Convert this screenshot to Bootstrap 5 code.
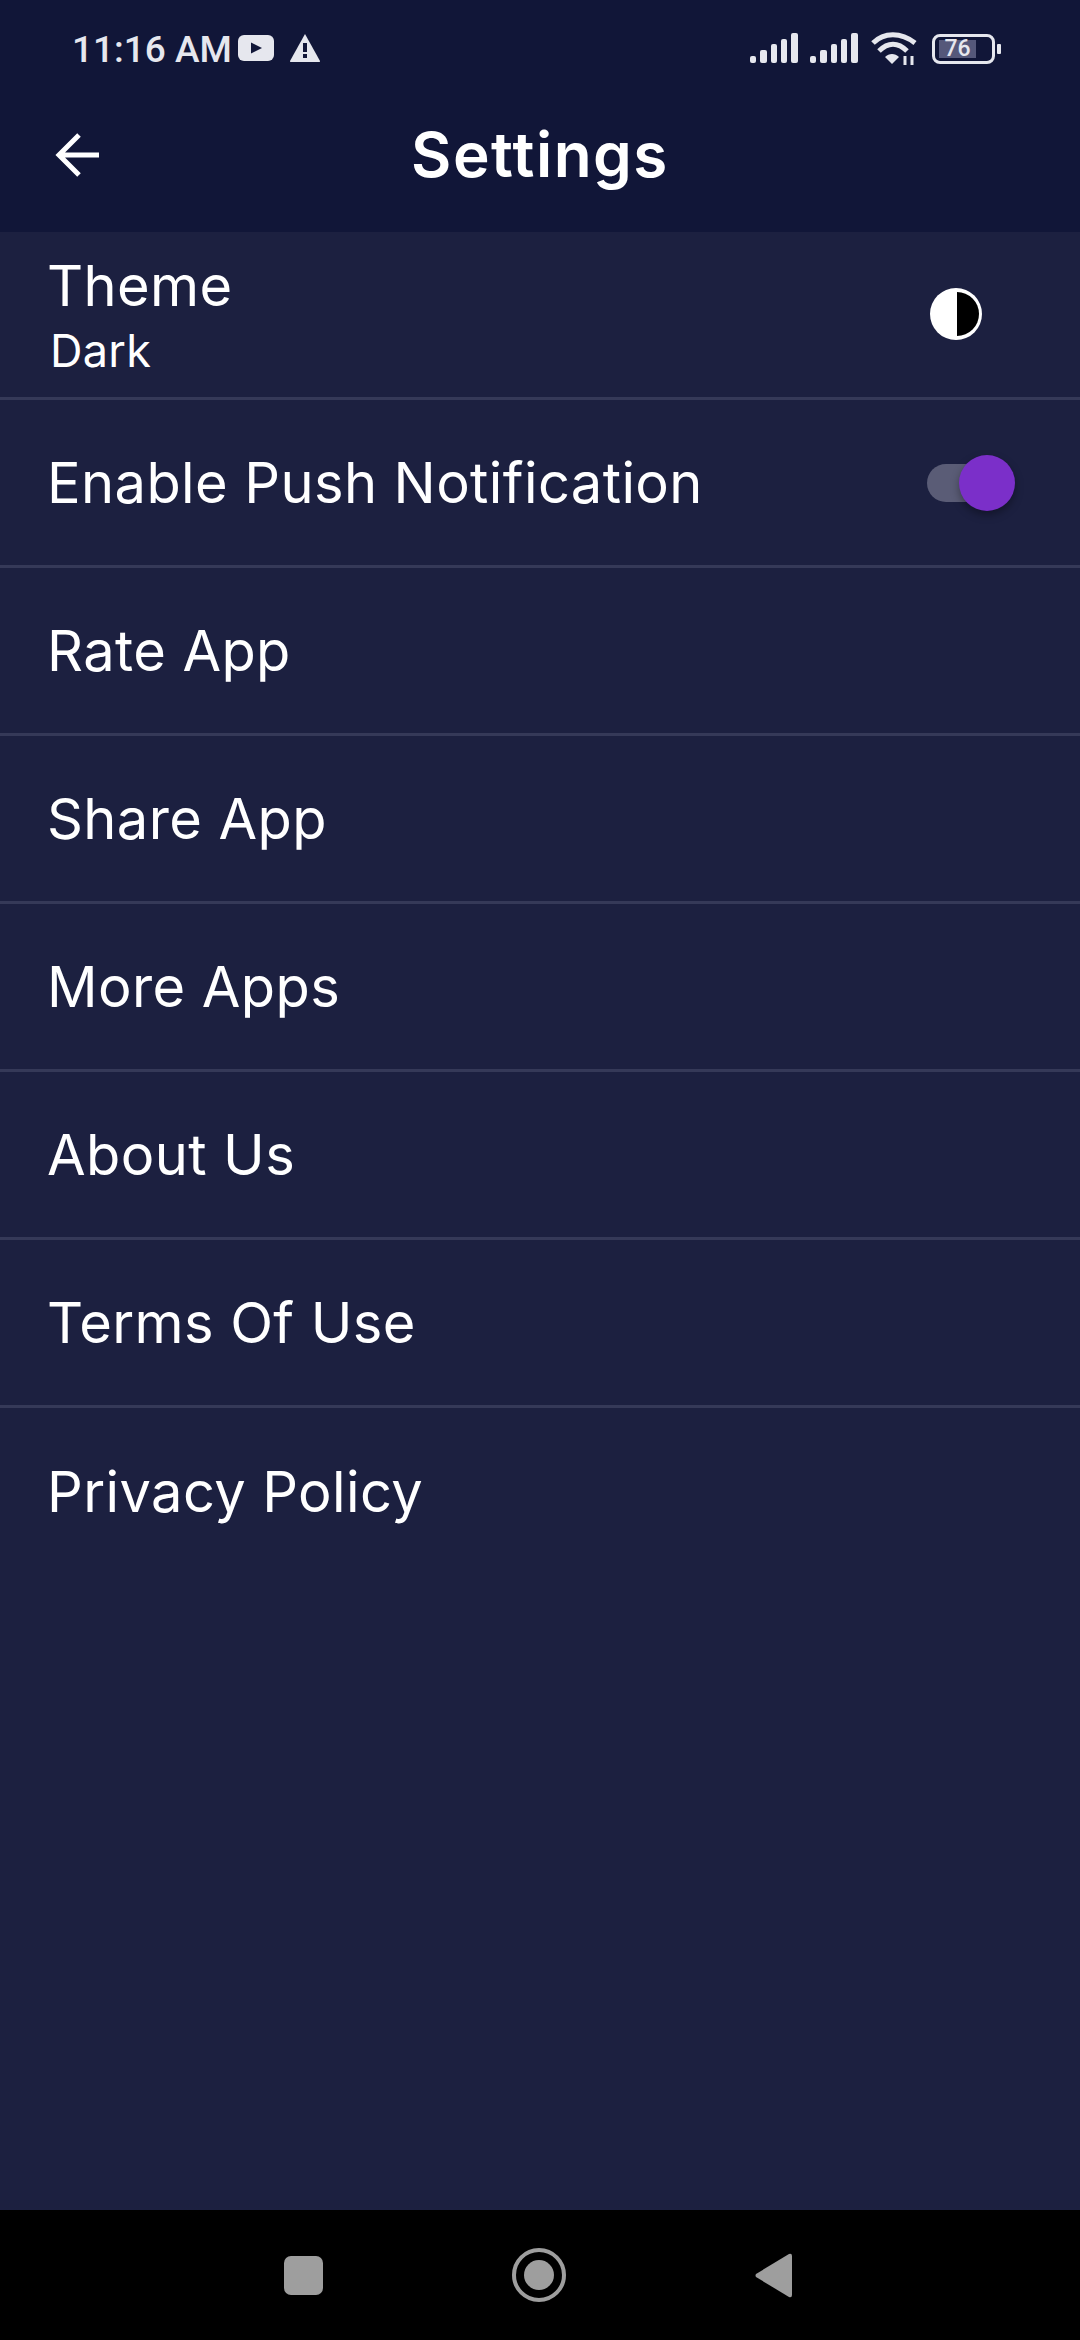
<!DOCTYPE html>
<html lang="en"><head><meta charset="utf-8">
<link href="https://cdn.jsdelivr.net/npm/bootstrap@5.3.0/dist/css/bootstrap.min.css" rel="stylesheet">
<style>
html,body{height:2340px;overflow:hidden}
body{background:#1c2040;color:#fff;font-family:Inter,Lato,"Liberation Sans",sans-serif;font-variant-ligatures:none}
.phone{width:1080px;height:2340px}
.topbar{background:#111638;height:232px}
.statusline{height:100px;padding:0 79px 0 72px}
.clock{font:500 37px/1 Roboto,sans-serif;color:#e6e7ee;margin-top:31px}
.titlebar{height:132px;padding-bottom:23px}
.backbtn{margin-left:55px;width:44px;flex:none}
.pagetitle{font-size:62px;font-weight:600;line-height:1;letter-spacing:1.500px;text-align:center;margin:0 99px 0 0;flex-grow:1}
.setrow{height:168px;border-bottom:3px solid #353958;padding:0 0 0 47px;font-size:56px;font-weight:400;letter-spacing:.4px;line-height:1}
.setrow.last{border-bottom:0}
.subtxt{font-size:45px;letter-spacing:.3px;margin-left:3px;margin-top:14px;line-height:1}
.navstrip{height:130px;background:#000}
.slider{position:relative;width:88px;height:56px;margin-right:65px}
.slidertrack{position:absolute;left:0;top:9px;width:66px;height:38px;border-radius:19px;background:#5a5c76}
.sliderknob{position:absolute;left:32px;top:0;width:56px;height:56px;border-radius:50%;background:#7b2fc9;box-shadow:0 4px 8px rgba(0,0,0,.35)}
.batterybox{width:63px;height:30px;border:3px solid #e6e7ee;border-radius:8px;padding-left:4px}
.batteryfill{display:block;background:#55587a;width:37px;height:18px;font:500 23px/18px Roboto,sans-serif;color:#e6e7ee;text-align:center}
.batterynub{display:block;width:4px;height:10px;background:#e6e7ee;margin-left:2px;border-radius:1px}
.homekey{width:39px;height:39px;background:#9e9e9e;border-radius:7px}
</style></head>
<body>
<div class="phone d-flex flex-column">
 <header class="topbar">
  <div class="statusline d-flex align-items-start">
   <span class="clock">11:16 AM</span>
   <svg width="36" height="26" viewBox="0 0 36 26" style="margin:35px 0 0 6px"><rect width="36" height="26" rx="6" fill="#e6e7ee"/><path d="M13 7.500 24 13 13 18.500Z" fill="#111638"/></svg>
   <svg width="32" height="30" viewBox="0 0 32 30" style="margin:33px 0 0 15px"><path d="M16 1 31 28Q31.500 29 30 29H2Q.5 29 1 28Z" fill="#e6e7ee"/><rect x="14" y="10" width="4" height="9" fill="#111638"/><rect x="14" y="21" width="4" height="4" fill="#111638"/></svg>
   <div class="ms-auto d-flex" style="margin-top:33px">
    <svg width="48" height="30" viewBox="0 0 48 30" fill="#e6e7ee"><rect x="0" y="23" width="6" height="7" rx="2"/><rect x="10" y="17" width="7" height="13" rx="2"/><rect x="21" y="11" width="6" height="19" rx="2"/><rect x="31" y="6" width="6" height="24" rx="2"/><rect x="41" y="0" width="7" height="30" rx="2"/></svg>
    <svg width="48" height="30" viewBox="0 0 48 30" fill="#e6e7ee" style="margin-left:12px"><rect x="0" y="23" width="6" height="7" rx="2"/><rect x="10" y="17" width="7" height="13" rx="2"/><rect x="21" y="11" width="6" height="19" rx="2"/><rect x="31" y="6" width="6" height="24" rx="2"/><rect x="41" y="0" width="7" height="30" rx="2"/></svg>
    <svg width="46" height="33" viewBox="0 0 46 33" style="margin-left:13px;margin-top:-1px" fill="none" stroke="#e6e7ee" stroke-width="5"><path d="M2 11C13 0 30 0 44 11"/><path d="M8 19C17 10 27 10 36 19"/><path d="M21 32 14 25C18 21 24 21 28 25Z" fill="#e6e7ee" stroke="none"/><path d="M34 24V33M41 24V33" stroke-width="3"/></svg>
    <div class="d-flex align-items-center" style="margin-left:15px">
     <div class="batterybox d-flex align-items-center"><span class="batteryfill">76</span></div>
     <span class="batterynub"></span>
    </div>
   </div>
  </div>
  <div class="titlebar d-flex align-items-center">
   <svg class="backbtn" width="44" height="44" viewBox="0 0 44 44" fill="none" stroke="#fff" stroke-width="5"><path d="M44 22H4M24 2 4 22 24 42"/></svg>
   <h1 class="pagetitle">Settings</h1>
  </div>
 </header>
 <main class="flex-grow-1">
  <div class="setrow d-flex align-items-center justify-content-between">
   <div><div style="margin-top:2px">Theme</div><div class="subtxt">Dark</div></div>
   <svg width="52" height="52" viewBox="0 0 52 52" style="margin-right:98px;margin-top:-2px"><circle cx="26" cy="26" r="26" fill="#fff"/><path d="M27 4A22 22 0 0 1 27 48Z" fill="#000"/></svg>
  </div>
  <div class="setrow d-flex align-items-center justify-content-between"><span>Enable Push Notification</span>
   <div class="slider"><span class="slidertrack"></span><span class="sliderknob"></span></div></div>
  <div class="setrow d-flex align-items-center">Rate App</div>
  <div class="setrow d-flex align-items-center">Share App</div>
  <div class="setrow d-flex align-items-center">More Apps</div>
  <div class="setrow d-flex align-items-center">About Us</div>
  <div class="setrow d-flex align-items-center">Terms Of Use</div>
  <div class="setrow last d-flex align-items-center">Privacy Policy</div>
 </main>
 <footer class="navstrip d-flex align-items-center">
  <div class="homekey" style="margin-left:284px"></div>
  <svg width="54" height="54" viewBox="0 0 54 54" style="margin-left:189px"><circle cx="27" cy="27" r="25" fill="none" stroke="#9e9e9e" stroke-width="4"/><circle cx="27" cy="27" r="15" fill="#9e9e9e"/></svg>
  <svg width="37" height="45" viewBox="0 0 37 45" style="margin-left:189px"><path d="M34 1Q37 0 37 3V42Q37 45 34 44L1 24Q0 22.500 1 21Z" fill="#9e9e9e"/></svg>
 </footer>
</div>
</body></html>
